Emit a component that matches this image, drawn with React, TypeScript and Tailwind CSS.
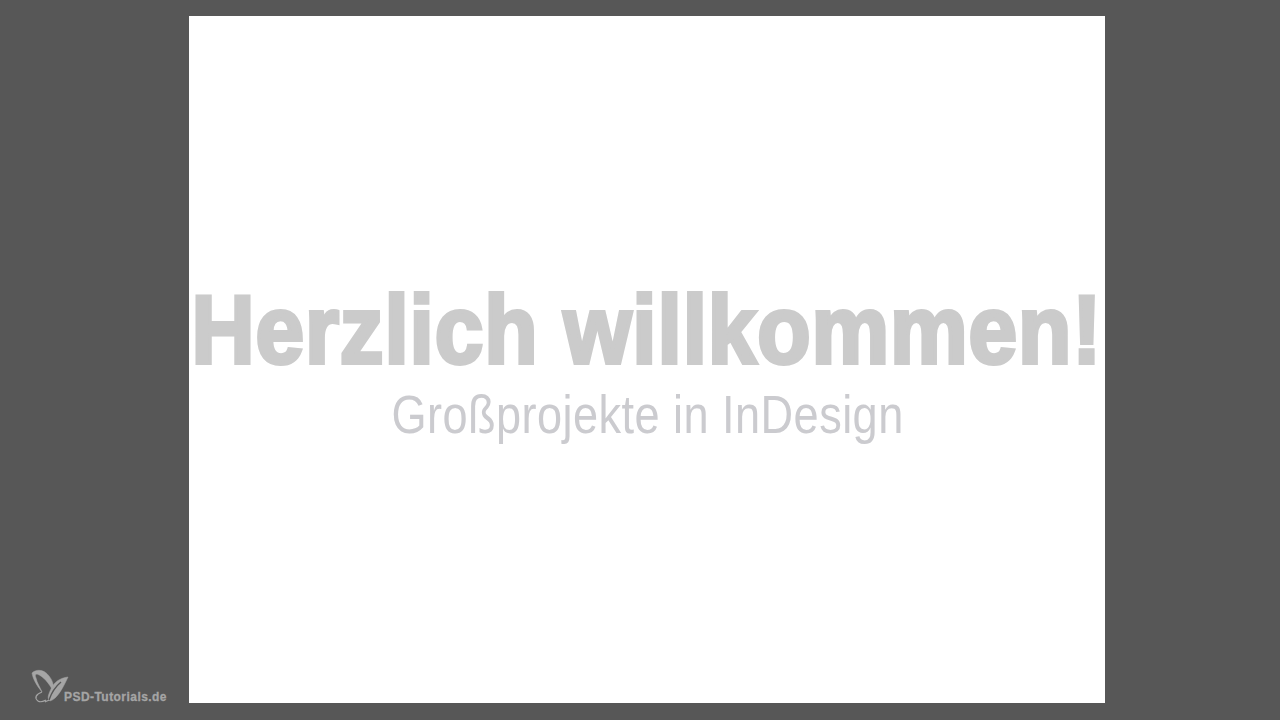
export default function App() {
  return (
    <div className="flex h-[720px] w-[1280px] overflow-hidden bg-[#575757] font-['Liberation_Sans',sans-serif]">
      {/* left gutter with watermark */}
      <div className="flex w-[189px] flex-col justify-end pb-[16px] pl-[30px]">
        <div className="flex items-end">
          <svg viewBox="0 0 36 36" className="h-[36px] w-[36px] shrink-0 overflow-visible" fill="none" stroke="#a5a5a5">
            <path d="M2 5 C6 1 14 1 19 8 C23 13 24 18 23 23 C19 15 13 8 7 6 C5 6 5 8 6 10 C7 15 10 19 12 24 C8 19 3 12 2 5 Z" fill="#a5a5a5" strokeWidth="0.5" />
            <path d="M12 24 C6 26 4 30 8 33 C11 35 14 33 16 32" strokeWidth="1.2" />
            <path d="M38 9 C30 10 24 14 21 21 C18 27 17 31 20 33 C27 31 33 20 38 9 Z" fill="#a5a5a5" strokeWidth="0.5" />
            <path d="M19 32 C21 26 25 19 31 14" stroke="#575757" strokeWidth="1.4" />
            <path d="M15 34 C16 33 18 33 19 32" strokeWidth="1.2" />
          </svg>
          <span className="-ml-[2px] whitespace-nowrap text-[12px] leading-[14px] font-bold tracking-[0.45px] text-[#a5a5a5] [-webkit-text-stroke:0.3px_#a5a5a5]">PSD-Tutorials.de</span>
        </div>
      </div>

      {/* slide */}
      <div className="mt-[16px] flex h-[687px] w-[916px] flex-col items-center bg-white pt-[264px]">
        <h1 className="scale-x-[0.9] whitespace-nowrap text-[97px] leading-[100px] font-bold tracking-[1px] text-[#cbcbcb] [-webkit-text-stroke:4px_#cbcbcb]">
          Herzlich willkommen!
        </h1>
        <p className="mt-[5px] ml-[2px] scale-x-[0.852] whitespace-nowrap text-[53px] leading-[60px] tracking-[0.5px] text-[#cbcbcf]">
          Großprojekte in InDesign
        </p>
      </div>
    </div>
  )
}
